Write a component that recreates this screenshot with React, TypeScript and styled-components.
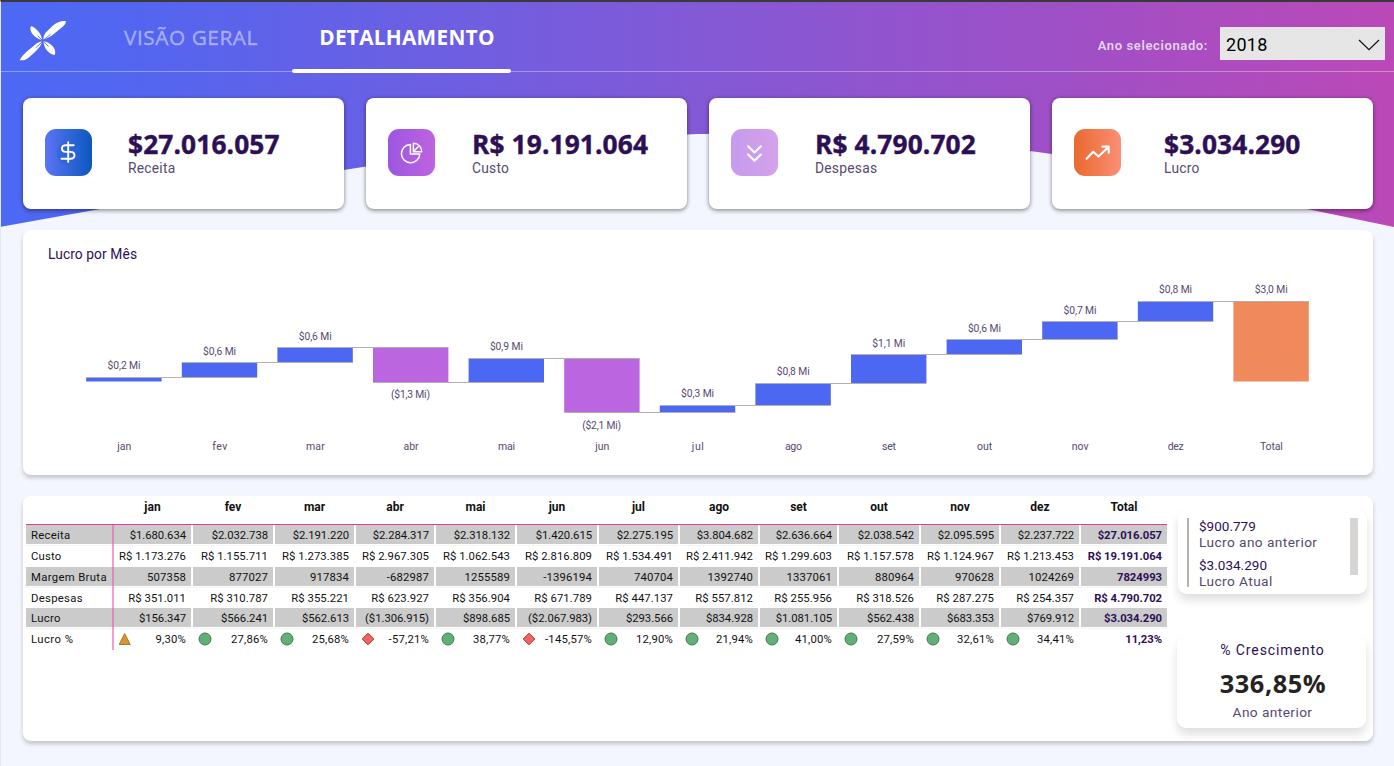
import React from "react";
import styled, { createGlobalStyle } from "styled-components";

const din = '"Roboto", "Liberation Sans", sans-serif';
const humanist = '"Open Sans", "Noto Sans", sans-serif';

const GlobalStyle = createGlobalStyle`
  * { box-sizing: border-box; }
  body { margin: 0; background: #f3f6fe; font-family: ${din}; }
`;

const Page = styled.div`
  position: relative;
  width: 1394px;
  height: 766px;
  overflow: hidden;
  border-top: 2px solid #3a3a3c;
  border-left: 1px solid #e6e6ea;
  background: #f3f6fe;
`;

const Backdrop = styled.svg`
  position: absolute;
  top: 0;
  left: 0;
  display: block;
`;

const Content = styled.div`
  position: relative;
  display: flex;
  flex-direction: column;
`;

const Header = styled.header`
  display: flex;
  height: 70px;
  border-bottom: 1px solid rgba(255, 255, 255, 0.35);
`;

const Logo = styled.svg`
  display: block;
  width: 60px;
  height: 60px;
  margin: 8px 31px 0 9px;
`;

const Tab = styled.div<{ $active?: boolean; $width: number; $indent?: number; $spacing: number }>`
  width: ${(p) => p.$width}px;
  height: 71px;
  padding-top: 20px;
  text-align: center;
  text-indent: ${(p) => p.$indent || 0}px;
  font: ${(p) => (p.$active ? 700 : 400)} 20.8px/30px ${humanist};
  letter-spacing: ${(p) => p.$spacing}px;
  color: ${(p) => (p.$active ? "#fff" : "rgba(255,255,255,0.42)")};
  -webkit-text-stroke: ${(p) => (p.$active ? "0" : "0.4px rgba(255,255,255,0.42)")};
  &::after {
    content: "";
    display: block;
    height: 4px;
    margin-top: 17px;
    border-radius: 2px;
    background: ${(p) => (p.$active ? "#fff" : "transparent")};
  }
`;

const Tabs = styled.nav`
  display: flex;
  gap: 11px;
`;

const YearPicker = styled.div`
  display: flex;
  align-items: flex-start;
  margin-left: auto;
  padding: 25px 9px 0 0;
`;

const YearLabel = styled.span`
  margin: 10px 12px 0 0;
  font: 600 13px/18px ${din};
  letter-spacing: 0.62px;
  color: #e3d5ee;
`;

const YearSelect = styled.div`
  display: flex;
  align-items: center;
  justify-content: space-between;
  width: 165px;
  height: 33px;
  padding: 2px 5px 0 6px;
  background: #e6e6e6;
  font: 400 18px/30px ${din};
  letter-spacing: 0.3px;
  color: #000;
`;

const KpiRow = styled.section`
  display: grid;
  grid-template-columns: repeat(4, 321px);
  gap: 22px;
  margin: 26px 0 0 22px;
`;

const KpiCard = styled.article`
  display: flex;
  height: 111px;
  border-radius: 8px;
  background: #fff;
  box-shadow: 0 2px 4px rgba(0, 0, 0, 0.32), 0 0 4px rgba(0, 0, 0, 0.2);
`;

const KpiIcon = styled.div<{ $from: string; $to: string }>`
  width: 47px;
  height: 47px;
  margin: 31px 0 0 22px;
  border-radius: 11px;
  background: linear-gradient(90deg, ${(p) => p.$from}, ${(p) => p.$to});
  svg { display: block; }
`;

const KpiText = styled.div<{ $left: number }>`
  padding: 31px 0 0 ${(p) => p.$left}px;
`;

const KpiValue = styled.div`
  font: 700 26.3px/30px ${humanist};
  letter-spacing: 0.12px;
  color: #2d0f55;
  -webkit-text-stroke: 0.4px #2d0f55;
  white-space: nowrap;
`;

const KpiLabel = styled.div`
  font: 400 13.8px/18px ${din};
  letter-spacing: 0.25px;
  color: #57496f;
`;

const Panel = styled.section`
  display: flex;
  width: 1350px;
  height: 245px;
  margin: 21px 0 0 22px;
  border-radius: 8px;
  background: #fff;
  box-shadow: 0 3px 4px rgba(0, 0, 0, 0.2);
`;

const Chart = styled.svg`
  display: block;
  font-family: ${din};
`;

const Table = styled.table`
  width: 1141px;
  height: 154px;
  margin-left: 3px;
  border-collapse: separate;
  border-spacing: 0;
  table-layout: fixed;
  font: 400 11.3px/14px ${din};
  color: #111;
`;

const HeadCell = styled.th`
  height: 29px;
  padding: 0 2px 6px 0;
  border-bottom: 1px solid #d83f9a;
  font-size: 12px;
  font-weight: 700;
  text-align: center;
  vertical-align: middle;
  &:last-child { padding-right: 0; }
`;

const Row = styled.tr<{ $shade: boolean; $h: number }>`
  height: ${(p) => p.$h}px;
  > * {
    height: ${(p) => p.$h}px;
    background-image: ${(p) =>
      p.$shade
        ? "linear-gradient(#cbcbcb 0 19px, #fff 19px 20px, #f3f3f3 20px)"
        : "none"};
  }
`;

const RowLabel = styled.th<{ $spacing: number }>`
  padding: 1px 0 0 5px;
  border-right: 2px solid rgba(240, 90, 175, 0.6);
  background-clip: border-box;
  text-align: left;
  font-weight: 400;
  letter-spacing: ${(p) => p.$spacing}px;
  white-space: nowrap;
`;

const Cell = styled.td<{ $total: boolean; $spacing: number }>`
  padding: 1px 5px 0 0;
  border-right: ${(p) => (p.$total ? 0 : 2)}px solid #fff;
  text-align: right;
  white-space: nowrap;
  font-weight: ${(p) => (p.$total ? 700 : 400)};
  color: ${(p) => (p.$total ? "#2d0f55" : "#111")};
  letter-spacing: ${(p) => p.$spacing}px;
`;

const Flagged = styled.div<{ $first: boolean }>`
  display: flex;
  justify-content: space-between;
  align-items: center;
  padding-left: ${(p) => (p.$first ? 4 : 5)}px;
  svg { display: block; margin-top: -2px; }
`;

const Side = styled.aside`
  display: flex;
  flex-direction: column;
  gap: 42px;
  padding: 14px 0 0 10px;
`;

const SideCard = styled.div<{ $shift?: boolean }>`
  width: 189px;
  margin-left: ${(p) => (p.$shift ? 1 : 0)}px;
  border-radius: 9px;
  background: #fff;
  box-shadow: 0 6px 10px rgba(0, 0, 0, 0.13);
`;

const Comparison = styled(SideCard)`
  display: flex;
  align-items: flex-start;
  height: 84px;
  padding: 8px 9px 0;
`;

const ComparisonList = styled.div`
  flex: 1;
  height: 69px;
  padding-left: 10px;
  border-left: 2px solid #b3b0ad;
`;

const ComparisonItem = styled.div`
  height: 39px;
`;

const SmallValue = styled.div`
  font: 400 13.5px/16px ${din};
  letter-spacing: 0.02px;
  color: #2d0f55;
`;

const SmallLabel = styled.div`
  font: 400 13.7px/17px ${din};
  letter-spacing: 0.42px;
  color: #57496f;
`;

const Scrollbar = styled.div`
  width: 8px;
  height: 57px;
  background: #d6d5d4;
`;

const Growth = styled(SideCard)`
  display: flex;
  flex-direction: column;
  align-items: center;
  gap: 3px;
  height: 92px;
  padding: 5px 0 0 2px;
`;

const GrowthTitle = styled.div`
  font: 400 14px/18px ${din};
  letter-spacing: 0.9px;
  color: #2d0f55;
`;

const GrowthValue = styled.div`
  margin: 4px 0 1px;
  font: 700 25.4px/34px ${humanist};
  letter-spacing: 0.55px;
  text-indent: 1px;
  color: #252423;
`;

const months = ["jan", "fev", "mar", "abr", "mai", "jun", "jul", "ago", "set", "out", "nov", "dez"];
const profit = [156347, 566241, 562613, -1306915, 898685, -2067983, 293566, 834928, 1081105, 562438, 683353, 769912];
const barLabels = ["$0,2 Mi", "$0,6 Mi", "$0,6 Mi", "($1,3 Mi)", "$0,9 Mi", "($2,1 Mi)", "$0,3 Mi", "$0,8 Mi", "$1,1 Mi", "$0,6 Mi", "$0,7 Mi", "$0,8 Mi", "$3,0 Mi"];
const axisWidths = [14, 15, 19, 15, 17, 14, 12, 17, 14, 15, 17, 16, 23];

const columnWidths = [88, 79, 82, 81, 80, 81, 82, 81, 80, 79, 82, 80, 80, 86];

const rows: { label: string; h: number; spacing: number; cellSpacing: number; values: string[] }[] = [
  { label: "Receita", h: 21, spacing: 0.3, cellSpacing: -0.05, values: ["$1.680.634", "$2.032.738", "$2.191.220", "$2.284.317", "$2.318.132", "$1.420.615", "$2.275.195", "$3.804.682", "$2.636.664", "$2.038.542", "$2.095.595", "$2.237.722", "$27.016.057"] },
  { label: "Custo", h: 21, spacing: 0.2, cellSpacing: 0.05, values: ["R$ 1.173.276", "R$ 1.155.711", "R$ 1.273.385", "R$ 2.967.305", "R$ 1.062.543", "R$ 2.816.809", "R$ 1.534.491", "R$ 2.411.942", "R$ 1.299.603", "R$ 1.157.578", "R$ 1.124.967", "R$ 1.213.453", "R$ 19.191.064"] },
  { label: "Margem Bruta", h: 21, spacing: 0.35, cellSpacing: 0.15, values: ["507358", "877027", "917834", "-682987", "1255589", "-1396194", "740704", "1392740", "1337061", "880964", "970628", "1024269", "7824993"] },
  { label: "Despesas", h: 20, spacing: 0.3, cellSpacing: 0.05, values: ["R$ 351.011", "R$ 310.787", "R$ 355.221", "R$ 623.927", "R$ 356.904", "R$ 671.789", "R$ 447.137", "R$ 557.812", "R$ 255.956", "R$ 318.526", "R$ 287.275", "R$ 254.357", "R$ 4.790.702"] },
  { label: "Lucro", h: 21, spacing: 0.3, cellSpacing: -0.05, values: ["$156.347", "$566.241", "$562.613", "($1.306.915)", "$898.685", "($2.067.983)", "$293.566", "$834.928", "$1.081.105", "$562.438", "$683.353", "$769.912", "$3.034.290"] },
  { label: "Lucro %", h: 21, spacing: 0.45, cellSpacing: 0.2, values: ["9,30%", "27,86%", "25,68%", "-57,21%", "38,77%", "-145,57%", "12,90%", "21,94%", "41,00%", "27,59%", "32,61%", "34,41%", "11,23%"] },
];

function StatusMark({ value }: { value: string }) {
  if (value.startsWith("-"))
    return (
      <svg width="14" height="14">
        <path d="M7 1.2 12.8 7 7 12.8 1.2 7Z" fill="#f0665c" stroke="#a83630" />
      </svg>
    );
  if (value === "9,30%")
    return (
      <svg width="14" height="14">
        <path d="M6.7 1.6 12.2 12.5H1.2Z" fill="#d9952f" stroke="#a9762a" />
      </svg>
    );
  return (
    <svg width="14" height="14">
      <circle cx="7" cy="7" r="6" fill="#62b077" stroke="#3f7a50" />
    </svg>
  );
}

function Waterfall() {
  const scale = 26.42 / 1e6;
  const base = 381.5;
  let sum = 0;
  const bars = profit.map((v, i) => {
    const start = base - sum * scale;
    sum += v;
    const end = base - sum * scale;
    return { x: 86.2 + i * 95.6, top: Math.min(start, end), bottom: Math.max(start, end), end, fill: v < 0 ? "#bb65e0" : "#4c68f3", negative: v < 0 };
  });
  bars.push({ x: 86.2 + 12 * 95.6, top: base - sum * scale, bottom: base, end: base - sum * scale, fill: "#f0895c", negative: false });
  return (
    <Chart width="1350" height="245" viewBox="23 230 1350 245">
      <text x="48" y="259" fontSize="13.8" fill="#2d0f55" textLength="89">Lucro por Mês</text>
      {bars.map((b, i) => (
        <g key={i}>
          <rect x={b.x} y={b.top} width="75.4" height={b.bottom - b.top} fill={b.fill} />
          <text x={b.x + 21.3 - (b.negative ? 3.3 : 0)} y={b.negative ? b.bottom + 16 : b.top - 7.9} fontSize="10.3" fill="#57496f" textLength={b.negative ? 39 : 33}>
            {barLabels[i]}
          </text>
          <text x={b.x + 38 - axisWidths[i] / 2} y="450" fontSize="10.5" fill="#57496f" textLength={axisWidths[i]}>
            {months[i] || "Total"}
          </text>
        </g>
      ))}
      {bars.slice(0, 12).map((b, i) => (
        <path key={i} d={`M${b.x} ${Math.floor(b.end) + 0.5}H${b.x + 171}`} stroke="#b3b0ad" strokeWidth="1" />
      ))}
    </Chart>
  );
}

const white = { fill: "none", stroke: "#fff", strokeLinecap: "round" as const, strokeLinejoin: "round" as const };

const kpis = [
  {
    value: "$27.016.057", label: "Receita", left: 36, from: "#5c74f6", to: "#0a58bd",
    icon: (
      <svg width="47" height="47" {...white} strokeWidth="1.9">
        <circle cx="24" cy="24" r="12" fill="#2a63d6" fillOpacity="0.55" stroke="none" />
        <path d="M23.2 13.3v19.6M28.7 16.2h-7.7c-5.4 0-5.4 6.7 0 6.7h4.3c5.6 0 5.6 6.9 0 6.9h-8.8" />
      </svg>
    ),
  },
  {
    value: "R$ 19.191.064", label: "Custo", left: 37, from: "#9c56e0", to: "#bd64e0",
    icon: (
      <svg width="47" height="47" {...white} strokeWidth="1.5">
        <path d="M22.4 15.4a9.2 9.2 0 1 0 9.4 9.6H22.4Z" />
        <path d="M25.4 14.2a8.3 8.3 0 0 1 8.3 8.5h-8.3Z" />
        <path d="M26.2 21.8l4-4" />
      </svg>
    ),
  },
  {
    value: "R$ 4.790.702", label: "Despesas", left: 37, from: "#c59bee", to: "#d5a1ea",
    icon: (
      <svg width="47" height="47" {...white} strokeWidth="2">
        <path d="m17.1 17.2 6.4 6.3 6.4-6.3M17.1 25.5l6.4 6.3 6.4-6.3" />
      </svg>
    ),
  },
  {
    value: "$3.034.290", label: "Lucro", left: 43, from: "#ea692e", to: "#fa8f76",
    icon: (
      <svg width="47" height="47" {...white} strokeWidth="2.1">
        <path d="m12.6 29.8 6.6-7 5.2 4.8 9.6-9.2M28.4 17.6h6.3v6.2" />
      </svg>
    ),
  },
];

export default function App() {
  return (
    <Page>
      <GlobalStyle />
      <Backdrop width="1393" height="230" viewBox="1 2 1393 230">
        <defs>
          <linearGradient id="sky">
            <stop offset="0" stopColor="#4d69f4" />
            <stop offset="0.08" stopColor="#5166f1" />
            <stop offset="0.5" stopColor="#8359d6" />
            <stop offset="0.78" stopColor="#a14fc5" />
            <stop offset="1" stopColor="#bb49b7" />
          </linearGradient>
        </defs>
        <path d="M0 0H1394V227L1307 209L1052 154L1030 151C930 136 850 134 760 134L697 134L687 134.6C560 144 440 154 344 170L100 209L0 227Z" fill="url(#sky)" />
      </Backdrop>
      <Content>
        <Header>
          <Logo viewBox="10 10 60 60" fill="#fff">
            <path d="M43.4 39.6C43.6 36.5 44 34.5 46 32.2L53 25.4C57 22.2 61.5 20.6 66 21.2C65.8 23.2 64.6 25 62.6 26.8L55 33C51.5 36 47.5 38.6 43.4 39.6Z" />
            <path d="M42.2 41.6C39.5 41.6 37 43.2 34.8 45L28 50.4C24 54 21 57 19.6 60.2C23 60.8 26 59.8 28.6 57.8L35 52C38.2 48.8 41.4 45.6 42.2 41.6Z" />
            <path d="M42.2 40.2C41.8 36.4 39.8 33 37 30C34.8 27.8 32.6 26.2 30.9 26.2C29.8 28.2 30.6 31.4 32.2 33.8C34.8 37 38.4 39.4 42.2 40.2Z" />
            <path d="M43.6 41.2C43.6 44.6 44.6 47.2 46.6 50C49 53 51.8 54.8 54.6 55C55.6 53.2 55.4 50.8 54 48C51.6 44.4 47.8 41.8 43.6 41.2Z" />
            <path d="M43.4 40.2 50.5 34.3M42.4 41.6 35.8 47.8M42 40 37.5 35.6M43.8 41.6 48.5 46.6" stroke="#5468f1" strokeWidth="0.9" />
          </Logo>
          <Tabs>
            <Tab $width={180} $spacing={0.55}>VISÃO GERAL</Tab>
            <Tab $active $width={219} $indent={11} $spacing={0.28}>DETALHAMENTO</Tab>
          </Tabs>
          <YearPicker>
            <YearLabel>Ano selecionado:</YearLabel>
            <YearSelect>
              2018
              <svg width="22" height="14" fill="none" stroke="#111" strokeWidth="1.2">
                <path d="m1 2 10 9.7L21 2" />
              </svg>
            </YearSelect>
          </YearPicker>
        </Header>
        <KpiRow>
          {kpis.map((k) => (
            <KpiCard key={k.label}>
              <KpiIcon $from={k.from} $to={k.to}>{k.icon}</KpiIcon>
              <KpiText $left={k.left}>
                <KpiValue>{k.value}</KpiValue>
                <KpiLabel>{k.label}</KpiLabel>
              </KpiText>
            </KpiCard>
          ))}
        </KpiRow>
        <Panel>
          <Waterfall />
        </Panel>
        <Panel>
          <Table>
            <colgroup>
              {columnWidths.map((w, i) => <col key={i} width={w} />)}
            </colgroup>
            <thead>
              <tr>
                <HeadCell />
                {[...months, "Total"].map((m) => <HeadCell key={m}>{m}</HeadCell>)}
              </tr>
            </thead>
            <tbody>
              {rows.map((r, ri) => (
                <Row key={r.label} $shade={ri % 2 === 0} $h={r.h}>
                  <RowLabel $spacing={r.spacing}>{r.label}</RowLabel>
                  {r.values.map((v, i) => (
                    <Cell key={i} $total={i === 12} $spacing={i === 12 ? -0.05 : r.cellSpacing}>
                      {ri === 5 && i < 12 ? <Flagged $first={i === 0}><StatusMark value={v} />{v}</Flagged> : v}
                    </Cell>
                  ))}
                </Row>
              ))}
            </tbody>
          </Table>
          <Side>
            <Comparison $shift>
              <ComparisonList>
                <ComparisonItem>
                  <SmallValue>$900.779</SmallValue>
                  <SmallLabel>Lucro ano anterior</SmallLabel>
                </ComparisonItem>
                <ComparisonItem>
                  <SmallValue>$3.034.290</SmallValue>
                  <SmallLabel>Lucro Atual</SmallLabel>
                </ComparisonItem>
              </ComparisonList>
              <Scrollbar />
            </Comparison>
            <Growth>
              <GrowthTitle>% Crescimento</GrowthTitle>
              <GrowthValue>336,85%</GrowthValue>
              <SmallLabel>Ano anterior</SmallLabel>
            </Growth>
          </Side>
        </Panel>
      </Content>
    </Page>
  );
}
